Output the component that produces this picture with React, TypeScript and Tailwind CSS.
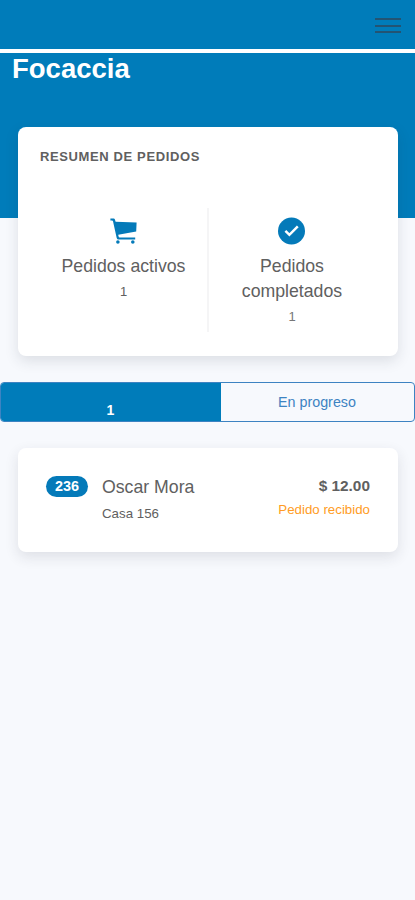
import React from "react";

function CartIcon() {
  return (
    <svg width="28" height="26" viewBox="0 0 28 26" fill="#047ab9" className="block">
      <path d="M0.4 0.4 H3.7 Q4.6 0.4 4.9 1.4 L5.6 3.7 L26.6 4.5 L26.2 13.6 L8.2 16.7 L8.6 18.5 Q8.8 19.4 9.6 19.4 H25.2 V21.5 H8.5 Q7.1 21.5 6.7 20 L3 3.2 Q2.8 2.4 2 2.4 H0.4 Z" />
      <circle cx="7.9" cy="24" r="1.8" />
      <circle cx="22.8" cy="24" r="1.8" />
    </svg>
  );
}

function CheckIcon() {
  return (
    <svg width="28" height="28" viewBox="0 0 28 28" className="block">
      <circle cx="13.5" cy="14" r="13.5" fill="#047ab9" />
      <path d="M7.4 13.8 L11.4 17.8 L19.8 9.3" fill="none" stroke="#fff" strokeWidth="2.5" />
    </svg>
  );
}

export default function App() {
  return (
    <div className="min-h-[900px] w-full overflow-hidden bg-[#f7f9fd] font-['Liberation_Sans',Arial,sans-serif] text-[#606060]">
      <header className="flex h-[53px] justify-end border-b-4 border-white bg-[#007cba] pr-[14px] pt-[18px]">
        <button aria-label="Menu" className="flex h-[15px] w-[26px] flex-col justify-between">
          <span className="block h-[2px] w-full bg-[#235473]" />
          <span className="block h-[2px] w-full bg-[#235473]" />
          <span className="block h-[2px] w-full bg-[#235473]" />
        </button>
      </header>

      <div className="h-[165px] bg-[#007cba] pl-3">
        <h1 className="text-[27.5px] font-bold leading-8 text-white">Focaccia</h1>
      </div>

      <main className="-mt-[91px]">
        <section className="relative ml-[18px] mr-[17px] h-[229px] rounded-lg bg-white pt-[21px] shadow-[0_5px_14px_rgba(40,45,60,0.13)]">
          <h2 className="pl-[22px] text-[13px] font-bold leading-[18px] tracking-[0.62px]">RESUMEN DE PEDIDOS</h2>
          <div className="mt-[42px] flex h-[124px]">
            <div className="flex w-[191px] flex-col items-center border-r-[2px] border-[#f5f5f6] pl-[22px] pt-[9px]">
              <div className="h-[37px] pt-[1px]"><CartIcon /></div>
              <p className="whitespace-nowrap text-[17.7px] leading-[25px]">Pedidos activos</p>
              <p className="mt-px text-[13px] leading-6">1</p>
            </div>
            <div className="flex flex-1 flex-col items-center pr-[23px] pt-[9px]">
              <div className="h-[37px]"><CheckIcon /></div>
              <p className="text-center text-[17.7px] leading-[25px]">Pedidos<br />completados</p>
              <p className="mt-px text-[13px] leading-6 text-[#777]">1</p>
            </div>
          </div>
        </section>

        <div className="mt-[26px] flex h-10 overflow-hidden rounded border border-[#3d83c2]">
          <button className="-m-px w-[221px] bg-[#007cba] pt-4 text-[14px] font-bold text-white">1</button>
          <button className="flex-1 pt-0.5 text-[14.3px] text-[#3d83c2]">En progreso</button>
        </div>

        <section className="ml-[18px] mr-[17px] mt-[26px] flex h-[104px] rounded-lg bg-white px-7 pt-7 shadow-[0_5px_14px_rgba(40,45,60,0.12)]">
          <span className="flex h-[21px] w-[42px] items-center justify-center rounded-full bg-[#047ab9] text-[14.4px] font-bold text-white">236</span>
          <div className="ml-[14px]">
            <p className="text-[17.7px] leading-[23px]">Oscar Mora</p>
            <p className="mt-[6px] text-[13.3px] leading-[18px]">Casa 156</p>
          </div>
          <div className="ml-auto text-right">
            <p className="text-[15.4px] font-bold leading-5">$ 12.00</p>
            <p className="mt-[5px] text-[13.3px] leading-[18px] text-[#ff9c24]">Pedido recibido</p>
          </div>
        </section>
      </main>
    </div>
  );
}
